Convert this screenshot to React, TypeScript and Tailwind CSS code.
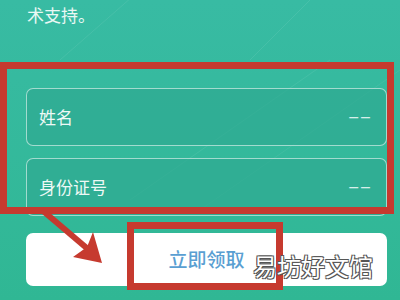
import React from "react";

const fields = ["姓名", "身份证号"];

export default function App() {
  return (
    <div
      className="relative w-[400px] h-[300px] overflow-hidden bg-gradient-to-b from-[#38bba3] to-[#30b794]"
      style={{ fontFamily: '"Noto Sans CJK SC", "Noto Sans", sans-serif' }}
    >
      {/* faint diagonal streaks in the background */}
      <svg className="absolute inset-0 pointer-events-none" width="400" height="300">
        <line x1="60" y1="60" x2="140" y2="-10" stroke="#ffffff" strokeOpacity="0.08" />
        <line x1="250" y1="60" x2="320" y2="-10" stroke="#ffffff" strokeOpacity="0.08" />
        <line x1="130" y1="200" x2="330" y2="60" stroke="#ffffff" strokeOpacity="0.07" />
        <line x1="200" y1="210" x2="400" y2="70" stroke="#ffffff" strokeOpacity="0.06" />
      </svg>

      <div className="relative pl-[26px] pr-[13px]">
        <p className="pt-[3px] pl-[1px] text-[17px] leading-[24px] text-[#eaf8f4]">术支持。</p>

        <div className="mt-[61px] flex flex-col gap-[12px]">
          {fields.map((f) => (
            <div
              key={f}
              className="h-[58px] flex items-center justify-between rounded-[7px] border border-white/55 bg-[#2faa91]/70 pl-[12px] pr-[13px]"
            >
              <span className="text-[17px] text-[#eef9f6]">{f}</span>
              <span className="text-[16px] tracking-[3px] text-white/80" style={{ fontFamily: '"Liberation Sans", sans-serif' }}>
                ––
              </span>
            </div>
          ))}
        </div>

        <button className="mt-[17px] w-full h-[53px] rounded-[7px] bg-white flex items-center justify-center text-[19px] font-medium text-[#5a9fd2]">
          立即领取
        </button>
      </div>

      {/* red annotation boxes */}
      <div className="absolute left-0 top-[62px] w-[394px] h-[152px] border-[7px] border-[#c63a2f]" />
      <div className="absolute left-[127px] top-[222px] w-[156px] h-[68px] border-[7px] border-[#c63a2f]" />

      {/* red arrow */}
      <svg className="absolute inset-0 pointer-events-none" width="400" height="300">
        <line x1="42" y1="210" x2="89" y2="250" stroke="#c63a2f" strokeWidth="6" />
        <polygon points="102,263 93,232 87,247 73,257" fill="#c63a2f" />
      </svg>

      {/* watermark */}
      <span className="absolute left-[253px] top-[250px] text-[24px] leading-[32px] text-white [text-shadow:1px_1px_0_#555,-1px_-1px_0_#555,1px_-1px_0_#555,-1px_1px_0_#555]">
        易坊好文馆
      </span>
    </div>
  );
}
